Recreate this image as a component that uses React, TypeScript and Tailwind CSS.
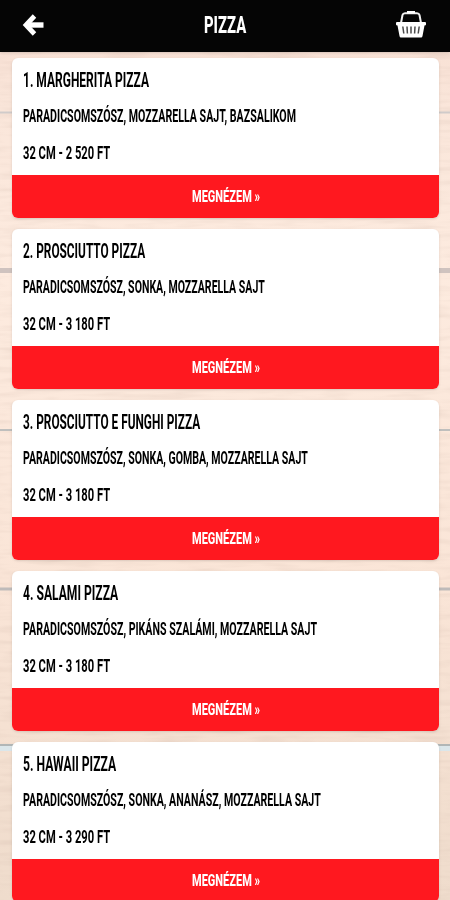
import { useLayoutEffect, useRef, useState } from "react";

interface Pizza {
    name: string;
    nameWidth: number;
    toppings: string;
    toppingsWidth: number;
    price: string;
}

const pizzas: Pizza[] = [
    {
        name: "1. Margherita pizza",
        nameWidth: 126,
        toppings: "Paradicsomszósz, mozzarella sajt, bazsalikom",
        toppingsWidth: 273,
        price: "32 cm - 2 520 Ft",
    },
    {
        name: "2. Prosciutto pizza",
        nameWidth: 122,
        toppings: "Paradicsomszósz, sonka, mozzarella sajt",
        toppingsWidth: 242,
        price: "32 cm - 3 180 Ft",
    },
    {
        name: "3. Prosciutto e funghi pizza",
        nameWidth: 177,
        toppings: "Paradicsomszósz, sonka, gomba, mozzarella sajt",
        toppingsWidth: 285,
        price: "32 cm - 3 180 Ft",
    },
    {
        name: "4. Salami pizza",
        nameWidth: 95,
        toppings: "Paradicsomszósz, pikáns szalámi, mozzarella sajt",
        toppingsWidth: 294,
        price: "32 cm - 3 180 Ft",
    },
    {
        name: "5. Hawaii pizza",
        nameWidth: 93,
        toppings: "Paradicsomszósz, sonka, ananász, mozzarella sajt",
        toppingsWidth: 298,
        price: "32 cm - 3 290 Ft",
    },
];

// Squeezes its text to the given width, for a condensed poster look
function CondensedText({
    text,
    width,
    className,
}: {
    text: string;
    width: number;
    className: string;
}) {
    const ref = useRef<HTMLSpanElement>(null);
    const [scale, setScale] = useState(0.6);

    useLayoutEffect(() => {
        if (ref.current) setScale(width / ref.current.offsetWidth);
    }, [text, width]);

    return (
        <span className="block" style={{ width }}>
            <span
                ref={ref}
                className={`block w-max origin-left whitespace-nowrap uppercase ${className}`}
                style={{ transform: `scaleX(${scale})` }}
            >
                {text}
            </span>
        </span>
    );
}

function BackIcon() {
    return (
        <svg width="22" height="24" viewBox="0 0 22 24" fill="none">
            <path
                d="M12.500 3 L4 12 L12.500 21"
                stroke="white"
                strokeWidth="4.800"
                strokeLinejoin="miter"
            />
            <path d="M4 12 H21.500" stroke="white" strokeWidth="5.400" />
        </svg>
    );
}

function BasketIcon() {
    return (
        <svg width="30" height="28" viewBox="0 0 30 28" fill="none">
            <path
                d="M5 13 L6.500 5 Q7 3.200 9 3.200 H21 Q23 3.200 23.500 5 L25 13"
                stroke="#f0f0f0"
                strokeWidth="2"
            />
            <path d="M11 2.200 H19" stroke="white" strokeWidth="2.400" />
            <path
                d="M1 12 H29 Q30 12 30 13 V14.500 Q30 15.500 28.500 15.500 L26.500 26 Q26.300 27.500 25 27.500 H5 Q3.700 27.500 3.500 26 L1.500 15.500 Q0 15.500 0 14.500 V13 Q0 12 1 12 Z"
                fill="white"
            />
            <path
                d="M6.800 16.500 L7.800 23.500 M11 16.500 L11.400 23.500 M15 16.500 V23.500 M19 16.500 L18.600 23.500 M23.200 16.500 L22.200 23.500"
                stroke="#4b4b4b"
                strokeWidth="1.500"
            />
        </svg>
    );
}

function WoodBackground() {
    return (
        <svg
            className="absolute inset-0 -z-10"
            width="450"
            height="900"
            viewBox="0 0 450 900"
        >
            <defs>
                <linearGradient id="wood" x1="0" y1="0" x2="0" y2="1">
                    <stop offset="0" stopColor="#f7ddd1" />
                    <stop offset="0.12" stopColor="#fae6da" />
                    <stop offset="0.3" stopColor="#fdebdf" />
                    <stop offset="0.65" stopColor="#fae5d7" />
                    <stop offset="1" stopColor="#efdccc" />
                </linearGradient>
                <filter id="grain" x="0" y="0" width="100%" height="100%">
                    <feTurbulence
                        type="fractalNoise"
                        baseFrequency="0.02 0.15"
                        numOctaves="3"
                        seed="4"
                    />
                    <feColorMatrix values="0 0 0 0 0.6  0 0 0 0 0.45  0 0 0 0 0.38  0.5 0 0 0 -0.22" />
                </filter>
            </defs>
            <rect width="450" height="900" fill="url(#wood)" />
            <rect width="450" height="900" filter="url(#grain)" />
            <path d="M0 112.500 H450" stroke="#d0cbca" strokeWidth="2" />
            <path d="M0 270.500 H450" stroke="#cfc3bf" strokeWidth="5" />
            <path d="M0 430 H450" stroke="#bfbfbd" strokeWidth="2" />
            <path d="M0 589 H450" stroke="#bfbbba" strokeWidth="3" />
            <path d="M0 745 H450" stroke="#b1b6b6" strokeWidth="2" />
            <path d="M0 748.500 H450" stroke="#dbe6ea" strokeWidth="5" />
        </svg>
    );
}

function PizzaCard({ pizza }: { pizza: Pizza }) {
    return (
        <div className="h-40 shrink-0 overflow-hidden rounded-md bg-white shadow">
            <div className="h-[117px] pt-[11px] pl-[11px] text-black">
                <CondensedText
                    text={pizza.name}
                    width={pizza.nameWidth}
                    className="text-[20px] leading-[22px] font-bold"
                />
                <CondensedText
                    text={pizza.toppings}
                    width={pizza.toppingsWidth}
                    className="mt-[14px] text-[18px] leading-[22px] font-bold"
                />
                <CondensedText
                    text={pizza.price}
                    width={87}
                    className="mt-[15px] text-[18px] leading-[22px] font-bold"
                />
            </div>
            <button className="flex h-[43px] w-full items-center justify-center bg-[#ff181f] pb-0.5 text-white">
                <CondensedText
                    text="Megnézem »"
                    width={68}
                    className="text-[17px] leading-[22px] font-extrabold"
                />
            </button>
        </div>
    );
}

export default function App() {
    return (
        <div className="relative isolate h-[900px] w-[450px] overflow-hidden font-['Roboto','Liberation_Sans',sans-serif]">
            <WoodBackground />
            <header className="grid h-[52px] grid-cols-[1fr_auto_1fr] items-center bg-[#050505] pr-6 pb-0.5 pl-[22px] text-white shadow">
                <BackIcon />
                <CondensedText
                    text="Pizza"
                    width={42}
                    className="ml-px text-[24px] leading-[26px] font-extrabold"
                />
                <div className="justify-self-end pb-0.5">
                    <BasketIcon />
                </div>
            </header>
            <main className="flex flex-col gap-[11px] pt-1.5 pr-[11px] pl-3">
                {pizzas.map((pizza) => (
                    <PizzaCard key={pizza.name} pizza={pizza} />
                ))}
            </main>
        </div>
    );
}
